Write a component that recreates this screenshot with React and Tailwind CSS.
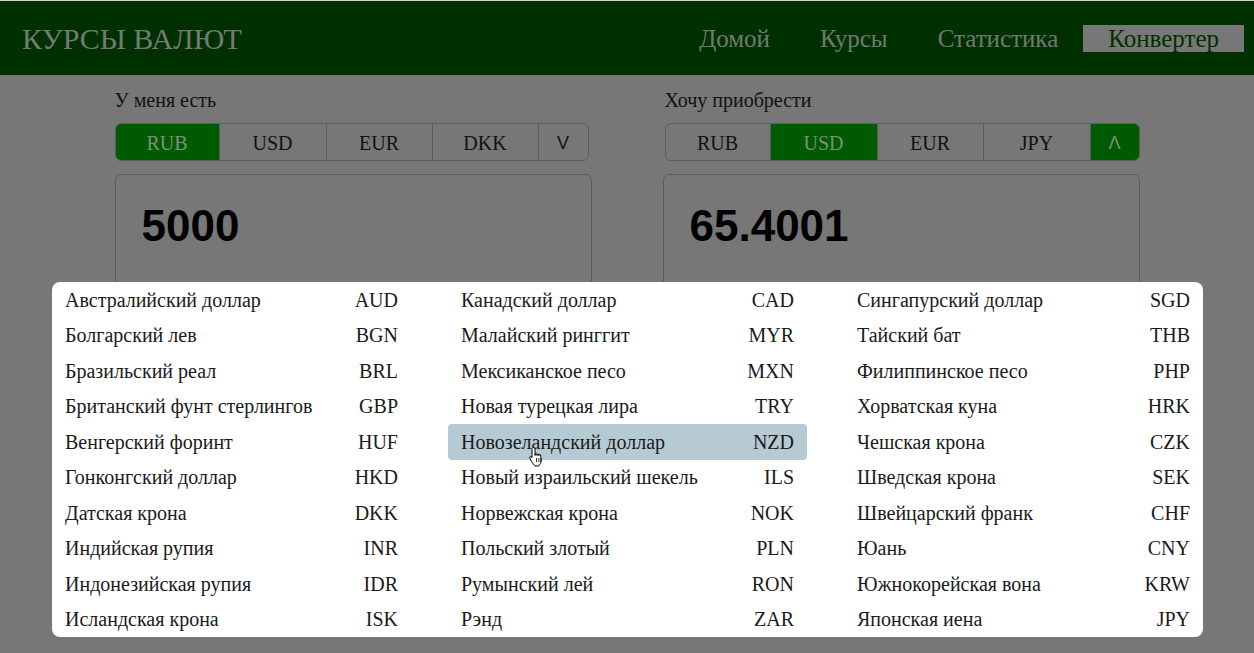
import React from "react";

const columns = [
  [
    ["Австралийский доллар", "AUD"],
    ["Болгарский лев", "BGN"],
    ["Бразильский реал", "BRL"],
    ["Британский фунт стерлингов", "GBP"],
    ["Венгерский форинт", "HUF"],
    ["Гонконгский доллар", "HKD"],
    ["Датская крона", "DKK"],
    ["Индийская рупия", "INR"],
    ["Индонезийская рупия", "IDR"],
    ["Исландская крона", "ISK"],
  ],
  [
    ["Канадский доллар", "CAD"],
    ["Малайский ринггит", "MYR"],
    ["Мексиканское песо", "MXN"],
    ["Новая турецкая лира", "TRY"],
    ["Новозеландский доллар", "NZD"],
    ["Новый израильский шекель", "ILS"],
    ["Норвежская крона", "NOK"],
    ["Польский злотый", "PLN"],
    ["Румынский лей", "RON"],
    ["Рэнд", "ZAR"],
  ],
  [
    ["Сингапурский доллар", "SGD"],
    ["Тайский бат", "THB"],
    ["Филиппинское песо", "PHP"],
    ["Хорватская куна", "HRK"],
    ["Чешская крона", "CZK"],
    ["Шведская крона", "SEK"],
    ["Швейцарский франк", "CHF"],
    ["Юань", "CNY"],
    ["Южнокорейская вона", "KRW"],
    ["Японская иена", "JPY"],
  ],
];

function Segments({ items, active, arrow, arrowActive, widths }) {
  return (
    <div className="flex h-[38px] rounded-[6px] border border-[#5c5c5c] overflow-hidden">
      {items.map((c, i) => (
        <div
          key={c}
          className={`flex items-center justify-center pt-[2px] text-[20px] border-r border-[#5c5c5c] ${widths[i]} ${
            c === active ? "bg-[#005a00] text-[#7c8f7c]" : "text-[#111]"
          }`}
        >
          {c}
        </div>
      ))}
      <div
        className={`flex flex-1 items-center justify-center pt-[2px] text-[18px] font-['Liberation_Sans',sans-serif] ${
          arrowActive ? "bg-[#005a00] text-[#7c8f7c]" : "text-[#111]"
        }`}
      >
        {arrow}
      </div>
    </div>
  );
}

function Hand() {
  return (
    <svg width="18" height="22" viewBox="0 0 18 22" className="absolute left-[80px] top-[164px]">
      <path
        d="M5.5 1.5c.8 0 1.5.7 1.5 1.5v6.5l.2-1.3c.2-.8 1.4-.8 1.6 0l.2 1.3.1-1c.2-.8 1.4-.8 1.6 0l.2 1.2.1-.7c.2-.8 1.4-.8 1.6 0 .3 1.5.4 3.5.4 5.5 0 2.5-1 4-2.5 5.5H7c-1-1.3-2.5-3-3.5-4.5L1.8 12c-.5-.8.3-1.8 1.2-1.3L4 11.6V3c0-.8.7-1.5 1.5-1.5z"
        fill="#fff"
        stroke="#000"
        strokeWidth="1"
        strokeLinejoin="round"
      />
      <path d="M8.5 12v4M10.8 12v4M13 12v4" stroke="#000" strokeWidth="0.8" />
    </svg>
  );
}

export default function App() {
  return (
    <div className="min-h-screen bg-[#777777] relative font-['Liberation_Serif','Times_New_Roman',serif]">
      {/* шапка */}
      <header className="h-[75px] bg-[#003000] border-t border-[#cfd6cf] flex items-center justify-between pl-[22px] pr-[10px]">
        <div className="text-[30px] text-[#727b72]">КУРСЫ ВАЛЮТ</div>
        <nav className="flex items-center text-[25px] text-[#6f7a6f]">
          <a className="px-[25px] leading-[27px]">Домой</a>
          <a className="px-[25px] leading-[27px]">Курсы</a>
          <a className="px-[25px] leading-[27px]">Статистика</a>
          <a className="px-[25px] leading-[27px] h-[27px] bg-[#777777] text-[#003000]">Конвертер</a>
        </nav>
      </header>

      {/* конвертер */}
      <main className="mx-auto w-[1025px] flex justify-between pt-[13px] text-[#111]">
        <div className="w-[477px]">
          <div className="text-[20px] leading-[24px]">У меня есть</div>
          <div className="mt-[11px] w-[474px]">
            <Segments
              items={["RUB", "USD", "EUR", "DKK"]}
              active="RUB"
              arrow="V"
              widths={["w-[104px]", "w-[107px]", "w-[106px]", "w-[106px]"]}
            />
          </div>
          <div className="mt-[13px] h-[200px] rounded-[6px] border border-[#5c5c5c] px-[26px] pt-[25px]">
            <div className="text-[44px] font-bold leading-[52px] text-black font-['Liberation_Sans',Arial,sans-serif]">
              5000
            </div>
          </div>
        </div>
        <div className="w-[477px] pl-[2px]">
          <div className="text-[20px] leading-[24px]">Хочу приобрести</div>
          <div className="mt-[11px] w-[475px]">
            <Segments
              items={["RUB", "USD", "EUR", "JPY"]}
              active="USD"
              arrow="Λ"
              arrowActive
              widths={["w-[105px]", "w-[107px]", "w-[106px]", "w-[107px]"]}
            />
          </div>
          <div className="mt-[13px] -ml-[2px] h-[200px] rounded-[6px] border border-[#5c5c5c] px-[26px] pt-[25px]">
            <div className="text-[44px] font-bold leading-[52px] text-black font-['Liberation_Sans',Arial,sans-serif]">
              65.4001
            </div>
          </div>
        </div>
      </main>

      {/* выпадающий список валют */}
      <div className="absolute left-[52px] top-[282px] w-[1151px] rounded-[8px] bg-white grid grid-cols-[359px_359px_359px] gap-x-[37px] text-[20px] text-[#1a1a1a]">
        {columns.map((col, ci) => (
          <div key={ci} className="relative">
            {col.map(([name, code]) => (
              <div
                key={code}
                className={`h-[35.5px] flex items-center justify-between px-[13px] rounded-[4px] ${
                  code === "NZD" ? "bg-[#b5cad3]" : ""
                }`}
              >
                <span>{name}</span>
                <span>{code}</span>
              </div>
            ))}
            {ci === 1 && <Hand />}
          </div>
        ))}
      </div>
    </div>
  );
}
